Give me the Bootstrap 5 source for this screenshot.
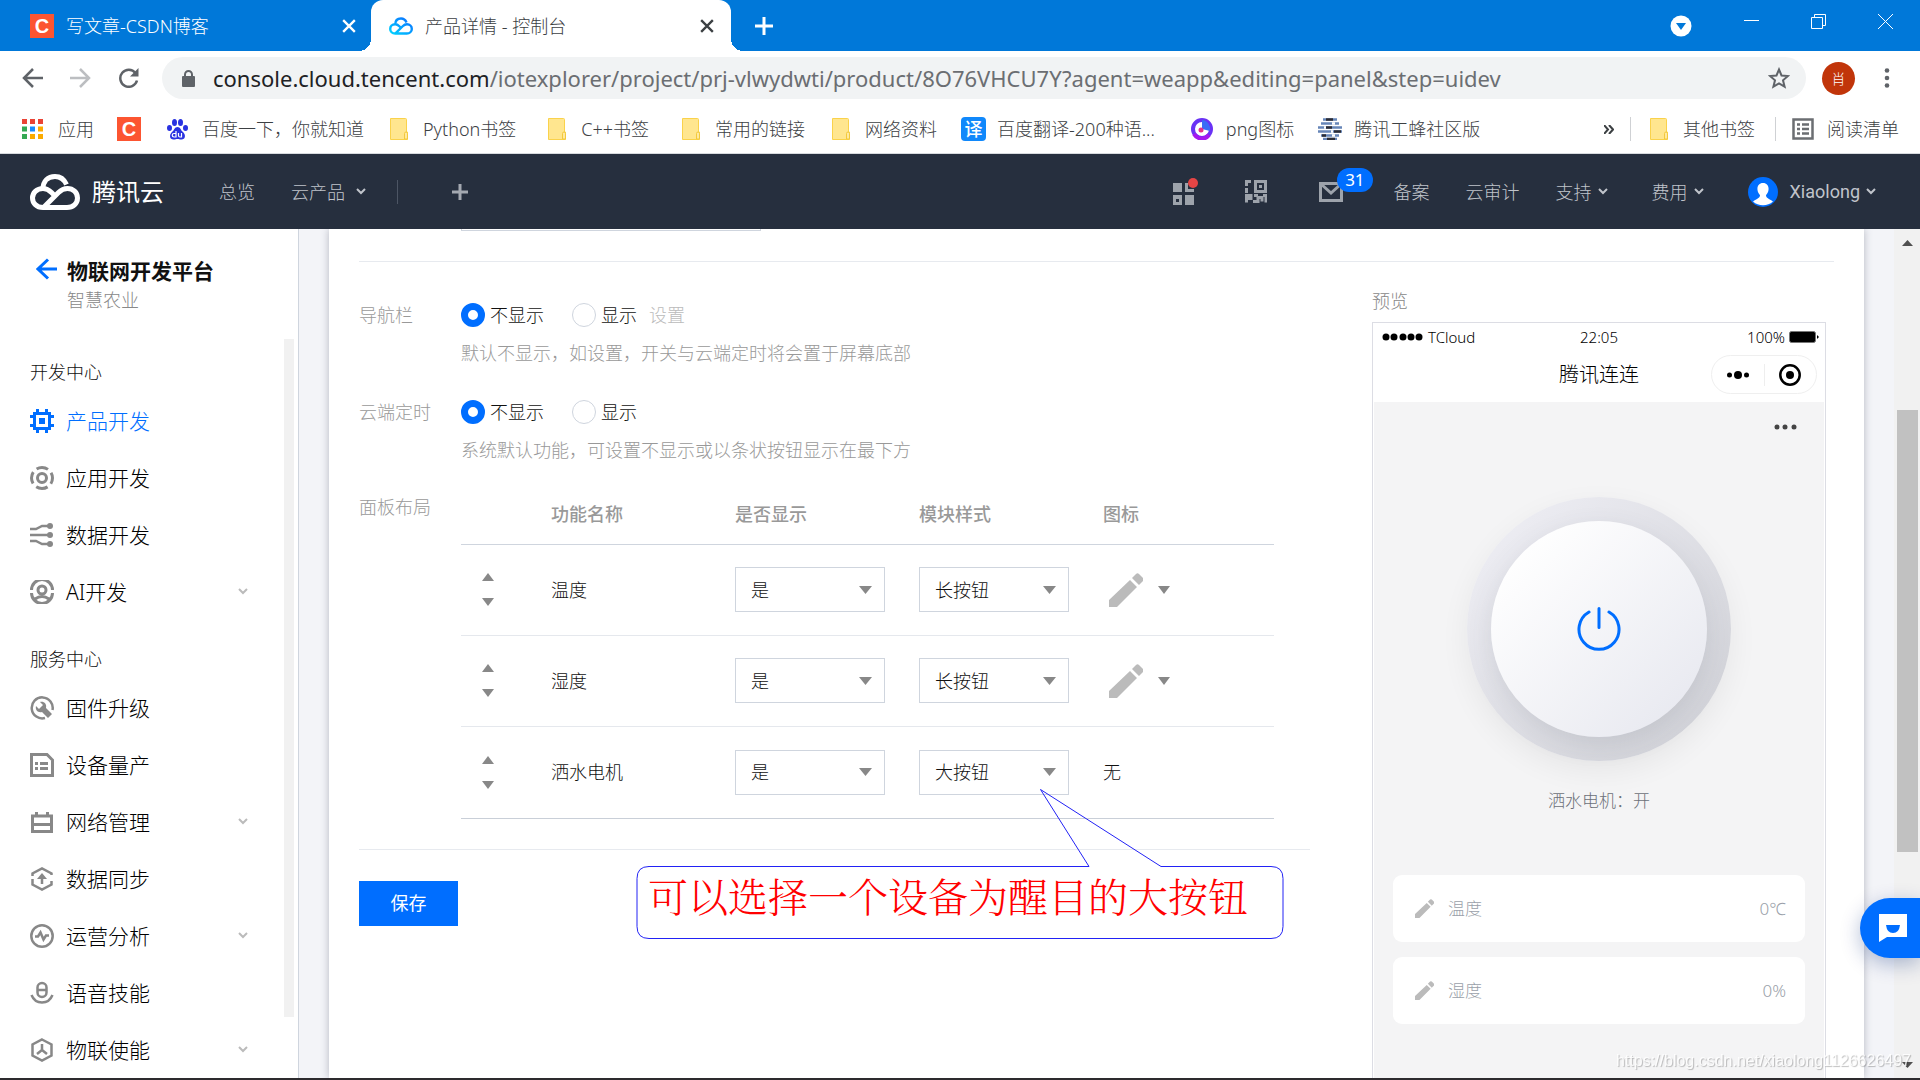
<!DOCTYPE html>
<html lang="zh-CN">
<head>
<meta charset="utf-8">
<meta name="viewport" content="width=device-width, initial-scale=1">
<title>产品详情 - 控制台</title>
<link href="https://cdn.jsdelivr.net/npm/bootstrap@5.3.0/dist/css/bootstrap.min.css" rel="stylesheet">
<style>
:root{--blue:#006eff;--ink:#111;--muted:#999;--line:#cfd5de;--soft:#e7eaef}
body{font-family:"Noto Sans","Noto Sans CJK SC",sans-serif;font-size:18px;line-height:24px;font-weight:300;color:var(--ink);background:#fff}
a{color:inherit;text-decoration:none}
button{font:inherit;color:inherit;background:none;border:0;padding:0;line-height:0}
svg{display:block;flex:none}
/* browser window */
.tabstrip{height:51px;background:#0078d9;color:#fff}
.tab-idle{width:371px;padding:0 15px 0 30px;gap:12px}
.tab-live{width:360px;padding:0 17px 0 18px;gap:12px;background:#fff;color:#3c4043;border-radius:12px 12px 0 0}
.tab-live::before,.tab-live::after{content:"";position:absolute;bottom:0;width:12px;height:12px}
.tab-live::before{left:-12px;background:radial-gradient(circle at 0 0,#0078d9 12px,#fff 12px)}
.tab-live::after{right:-12px;background:radial-gradient(circle at 100% 0,#0078d9 12px,#fff 12px)}
.addrbar{height:54px;padding:0 30px 0 22px;color:#5f6368}
.omnibox{height:42px;border-radius:21px;background:#f1f3f4;padding:0 16px 0 20px;gap:18px;margin:0 16px 0 22px}
.urltext{font-size:22px;line-height:30px;font-weight:400;color:#6b6e72}
.urltext b{font-weight:400;color:#202124}
.profile-dot{width:33px;height:33px;border-radius:50%;background:#c1350a;color:#fff;font-size:14px;line-height:33px}
.bookmarks{height:49px;border-bottom:1px solid #d7dade;padding:0 21px 0 22px;color:#3c4043}
.bm{display:flex;align-items:center;gap:15px;white-space:nowrap}
.csdn{width:24px;height:24px;background:#fc5531;color:#fff;font:bold 20px/24px "Liberation Sans",sans-serif;text-align:center;flex:none}
.yi{width:25px;height:24px;border-radius:4px;background:#1088fb;color:#fff;font-size:18px;line-height:24px;font-weight:500;text-align:center}
.vsep{width:1px;height:24px;background:#cfd1d4}
/* console header */
.topbar{height:75px;background:#262f3e;color:#c0c4cb;padding:0 44px 0 30px}
.brand{color:#fff;font-size:24px;line-height:32px;font-weight:400;gap:12px}
.topbar .vsep{background:#4c5564}
.count{right:-30px;top:-14px;height:24px;padding:0 8px;border-radius:12px;background:var(--blue);color:#fff;font-size:17px;line-height:24px;font-weight:400}
/* sidebar */
.side{width:299px;border-right:1px solid #cfd5de;background:#fff}
.side h1{font-size:21px;line-height:28px;font-weight:700;margin:0}
.side .heading{font-size:18px;line-height:24px;margin:0;padding-left:30px;font-weight:300}
.side .item{height:57px;padding:0 50px 0 30px;gap:12px;font-size:21px;line-height:28px;color:#000}
.side .item svg:first-child{color:#888}
.side .item span{flex:1}
.side .item.on,.side .item.on svg:first-child{color:var(--blue)}
.side-track{width:10px;right:4px;top:110px;bottom:61px;background:#f1f1f1}
/* page */
.page{background:#f3f4f8;padding:0 30px}
.sheet{display:flow-root;background:#fff;padding:0 30px;box-shadow:0 0 8px rgba(54,58,80,.32)}
.cut-input{width:300px;height:45px;margin:-43px 0 0 102px;border:1px solid var(--line);border-radius:0}
.rule{height:1px;background:var(--soft)}
.cols{gap:62px}
.fields{padding-top:41px}
.field-label{width:102px;color:var(--muted);flex:none}
.hint{color:var(--muted);margin-top:14px}
.pick{display:flex;align-items:center;gap:5px;margin:0}
.pick .form-check-input{width:24px;height:24px;margin:0;border:1px solid var(--line);box-shadow:none;background-image:none}
.pick .form-check-input:checked{border:7px solid var(--blue);background:#fff}
.layout-table{width:813px;table-layout:fixed;margin:0;color:inherit;--bs-table-bg:transparent}
.layout-table th{height:59px;padding:0;vertical-align:middle;color:var(--muted);font-weight:500;border-bottom:1px solid var(--line)}
.layout-table td{height:91px;padding:0;vertical-align:middle;border-bottom:1px solid #e5e8ed;color:inherit}
.layout-table tbody tr:last-child td{height:92px;border-bottom-color:#c9cfd8}
.layout-table .form-select{width:150px;height:45px;border:1px solid var(--line);border-radius:0;padding:0 30px 0 15px;font-size:18px;line-height:24px;font-weight:300;color:var(--ink);background-position:right 12px center;background-size:13px 8px;--bs-form-select-bg-img:url("data:image/svg+xml,%3csvg xmlns='http://www.w3.org/2000/svg' viewBox='0 0 13 8'%3e%3cpath fill='%23888' d='M0 0h13L6.500 8z'/%3e%3c/svg%3e")}
.movers{gap:17px;padding-left:21px;color:#888}
.save{width:99px;height:45px;background:var(--blue);color:#fff;border-radius:0;font-size:18px;line-height:24px;font-weight:400;margin-top:31px}
.save:hover{background:#0062e3;color:#fff}
.callout{left:277px;bottom:-13px;width:648px;height:150px;pointer-events:none}
.callout p{position:absolute;left:12px;bottom:18px;margin:0;font:300 40px/44px "Liberation Serif","Noto Serif CJK SC","Noto Sans CJK SC",serif;color:#f00;white-space:nowrap}
/* phone preview */
.preview{width:454px;flex:none;padding-top:27px;margin-right:8px}
.phone{border:1px solid #dcdde4;margin-top:9px;color:#000}
.phone-status{height:27px;padding:0 6px 0 9px;font-size:15px;line-height:20px}
.phone-title{height:52px;padding-bottom:2px;font-size:20px;line-height:28px}
.capsule{right:8px;top:5px;width:106px;height:39px;border:1px solid #efefef;border-radius:20px;padding:0 15px}
.phone-body{background:#f4f4f5;margin:0 1px;padding:19px 19px 100px;height:780px}
.dial{width:264px;height:264px;border-radius:50%;margin-top:64px;background:linear-gradient(135deg,#ededf3 10%,#cfd0d6 95%);box-shadow:0 10px 30px rgba(0,0,0,.06)}
.dial button{width:216px;height:216px;border-radius:50%;background:linear-gradient(135deg,#fff 12%,#e8e9f0 90%);box-shadow:0 8px 24px rgba(80,82,100,.13);color:#006eff}
.dial-name{margin:28px 0 62px;font-size:17px;color:#6c7078}
.tile{height:67px;border-radius:9px;background:#fff;padding:0 19px 0 22px;gap:14px;font-size:17px;color:#9a9fa9;margin-bottom:15px}
/* scroll track, chat, footer strip */
.track{width:26px;background:#f1f1f1;padding:11px 0 10px}
.thumb{width:21px;height:442px;margin-top:164px;background:#c1c1c1}
.chat{position:fixed;right:0;bottom:122px;width:60px;height:60px;border-radius:30px 0 0 30px;background:var(--blue);color:#fff;box-shadow:0 6px 20px rgba(0,40,120,.3);padding-left:19px}
.watermark{position:fixed;right:9px;bottom:7px;font:16px/24px "Liberation Sans",sans-serif;color:rgba(255,255,255,.85);text-shadow:1px 1px 1px rgba(0,0,0,.25)}
.strip{height:2px;background:#2d2b2e}
</style>
<script src="https://cdn.jsdelivr.net/npm/bootstrap@5.3.0/dist/js/bootstrap.bundle.min.js"></script>
</head>
<body class="vh-100 overflow-hidden d-flex flex-column">
<svg width="0" height="0" class="position-absolute" aria-hidden="true">
<symbol id="x" viewBox="0 0 12 12"><path d="M1 1l10 10M11 1L1 11" fill="none" stroke="currentColor" stroke-width="2"/></symbol>
<symbol id="chev" viewBox="0 0 10 7"><path d="M1 1l4 4 4-4" fill="none" stroke="currentColor" stroke-width="2"/></symbol>
<symbol id="folder" viewBox="0 0 18 22"><path d="M.5.5h15a1 1 0 0 1 1 1V14h1v7.500H.5z" fill="#ffe68f" stroke="#fad24b"/><path d="M14.500 21v-5.500q0-1.500 1.500-1.500t1.500 1.500V21z" fill="#ffe9a0" stroke="#f3c93c"/></symbol>
<linearGradient id="skyfade" x1="0" y1="1" x2="1" y2="0"><stop offset="0" stop-color="#00d2ff"/><stop offset="1" stop-color="#0a6cff"/></linearGradient>
<symbol id="cloud" viewBox="0 0 50 36"><path d="M13 15C13 7 18 2.500 25 2.500c5.500 0 9.500 3.500 11.500 8M18 33.500H13C6.500 33.500 2.500 29 2.500 24S6.500 14.500 13 14.500c3.500 0 6 1.500 8.500 4l4 4M17 33.500h20c6 0 10.500-4 10.500-9.500S43 14.500 37.500 14.500c-4 0-6.500 1.500-9 4L14 33" fill="none" stroke-width="5"/></symbol>
<symbol id="pencil" viewBox="0 0 34 34"><path d="M0 34v-7L21 7l7 7L8 34zM23 5l4-4q1.500-1.500 3 0l4 4q1 1.500 0 3l-4 4z" fill="#bbb"/></symbol>
<symbol id="up" viewBox="0 0 12 8"><path d="M6 0l6 8H0z" fill="currentColor"/></symbol>
<symbol id="down" viewBox="0 0 12 8"><path d="M0 0h12L6 8z" fill="currentColor"/></symbol>
</svg>

<header class="tabstrip d-flex flex-shrink-0">
  <div class="tab-idle d-flex align-items-center">
    <span class="csdn">C</span><span class="flex-grow-1">写文章-CSDN博客</span>
    <button aria-label="关闭标签页"><svg width="14" height="14"><use href="#x"/></svg></button>
  </div>
  <div class="tab-live d-flex align-items-center position-relative">
    <svg width="24" height="18" stroke="url(#skyfade)"><use href="#cloud"/></svg><span class="flex-grow-1">产品详情 - 控制台</span>
    <button aria-label="关闭标签页"><svg width="14" height="14"><use href="#x"/></svg></button>
  </div>
  <button class="ms-4 me-auto" aria-label="新标签页"><svg width="18" height="18" stroke="#fff" stroke-width="3"><path d="M9 0v18M0 9h18"/></svg></button>
  <div class="d-flex align-items-center pb-2" style="gap:52px;padding-right:27px">
    <button aria-label="搜索标签页" class="pt-2"><svg width="22" height="22"><circle cx="11" cy="11" r="10.500" fill="#fff"/><path d="M6 8h10l-5 7z" fill="#0078d9"/></svg></button>
    <button aria-label="最小化"><svg width="15" height="15"><path d="M0 6.500h15" stroke="#fff"/></svg></button>
    <button aria-label="还原"><svg width="15" height="15" fill="none" stroke="#fff"><path d="M.5 3.500h11v11H.5zM3.500 3V.5h11v11H12"/></svg></button>
    <button aria-label="关闭"><svg width="15" height="15" stroke="#fff"><path d="M0 0l15 15M15 0L0 15"/></svg></button>
  </div>
</header>

<div class="addrbar d-flex align-items-center flex-shrink-0">
  <div class="d-flex" style="gap:27px">
  <button aria-label="后退"><svg width="21" height="20" fill="none" stroke="#5f6368" stroke-width="2.500"><path d="M21 10H2M11 1l-9 9 9 9"/></svg></button>
  <button aria-label="前进"><svg width="21" height="20" fill="none" stroke="#bcbec1" stroke-width="2.500"><path d="M0 10h19M10 1l9 9-9 9"/></svg></button>
  <button aria-label="刷新"><svg width="22" height="20" fill="none" stroke="#5f6368" stroke-width="2.500"><path d="M17.500 5A8.500 8.500 0 1 0 19 12.500"/><path d="M20.500 0v8.500H12z" fill="#5f6368" stroke="none"/></svg></button>
  </div>
  <div class="omnibox flex-grow-1 d-flex align-items-center">
    <svg width="13" height="17"><rect y="6" width="13" height="11" rx="1" fill="#5f6368"/><path d="M3 7V4.500a3.500 3.500 0 0 1 7 0V7" fill="none" stroke="#5f6368" stroke-width="2"/></svg>
    <span class="urltext flex-grow-1"><b>console.cloud.tencent.com</b>/iotexplorer/project/prj-vlwydwti/product/8O76VHCU7Y?agent=weapp&amp;editing=panel&amp;step=uidev</span>
    <button aria-label="收藏"><svg width="22" height="22" viewBox="0 0 22 22" fill="none" stroke="#5f6368" stroke-width="2"><path d="M11 2.500l2.500 6 6.500.5-5 4.300 1.600 6.400L11 16.300l-5.600 3.400L7 13.300 2 9l6.500-.5z"/></svg></button>
  </div>
  <span class="profile-dot text-center">肖</span>
  <button aria-label="菜单" style="margin-left:29px"><svg width="6" height="20" fill="#5f6368"><circle cx="3" cy="2.500" r="2.300"/><circle cx="3" cy="10" r="2.300"/><circle cx="3" cy="17.500" r="2.300"/></svg></button>
</div>

<nav class="bookmarks d-flex align-items-center flex-shrink-0" aria-label="书签栏">
  <a class="bm" href="#"><svg width="21" height="20"><path d="M0 0h5v5H0zM8 0h5v5H8zM16 0h5v5h-5z" fill="#ea4335"/><path d="M0 7.500h5v5H0zM0 15h5v5H0z" fill="#34a853"/><path d="M8 7.500h5v5H8z" fill="#1a8cff"/><path d="M16 7.500h5v5h-5zM8 15h5v5H8zM16 15h5v5h-5z" fill="#fbab00"/></svg>应用</a>
  <a class="csdn" href="#" style="margin-left:23px">C</a>
  <a class="bm" href="#" style="margin-left:26px;gap:14px"><svg width="21" height="21" fill="#2932e1"><ellipse cx="7.500" cy="3.500" rx="2.500" ry="3.500"/><ellipse cx="13.500" cy="3.500" rx="2.500" ry="3.500"/><ellipse cx="2.500" cy="9" rx="2.500" ry="3"/><ellipse cx="18.500" cy="9" rx="2.500" ry="3"/><path d="M10.500 8c3 0 3 3 5.500 5s3 7-1 7.500c-2 .3-3-.5-4.500-.5s-2.500.8-4.500.5c-4-.5-3.500-5.500-1-7.500S7.500 8 10.500 8z"/><path d="M9 12v6H7a1.500 1.500 0 0 1 0-3.500h2M11.500 14v2.500q0 1.500 1.500 1.500h1.500v-4" fill="none" stroke="#fff" stroke-width="1.200"/></svg>百度一下，你就知道</a>
  <a class="bm" href="#" style="margin-left:26px"><svg width="18" height="22"><use href="#folder"/></svg>Python书签</a>
  <a class="bm" href="#" style="margin-left:32px"><svg width="18" height="22"><use href="#folder"/></svg>C++书签</a>
  <a class="bm" href="#" style="margin-left:33px"><svg width="18" height="22"><use href="#folder"/></svg>常用的链接</a>
  <a class="bm" href="#" style="margin-left:27px"><svg width="18" height="22"><use href="#folder"/></svg>网络资料</a>
  <a class="bm" href="#" style="margin-left:24px;gap:11px"><span class="yi">译</span>百度翻译-200种语...</a>
  <a class="bm" href="#" style="margin-left:36px;gap:13px"><svg width="22" height="22"><circle cx="11" cy="11" r="9" fill="#fff" stroke="#6a32f5" stroke-width="4"/><path d="M11 11V2a9 9 0 0 1 8 11z" fill="#3b6cf6"/><path d="M3 16a9 9 0 0 0 15 1" fill="none" stroke="#a617ee" stroke-width="4"/><circle cx="10" cy="12" r="2.500" fill="#e8308a"/></svg>png图标</a>
  <a class="bm" href="#" style="margin-left:24px;gap:12px"><svg width="24" height="22"><path d="M5 1.500h14M3 5.500h18M0 9.500h24M0 13.500h24M3 17.500h18M5 21h14" stroke="#6685b8" stroke-width="2.500"/><path d="M8 1.500h7M8 9.500h6M16 13.500h7M4 17.500h4M9 21h8" stroke="#2c2c34" stroke-width="2.500"/><path d="M14 5.500h3M6 9.500h2M13 13.500h2M14 17.500h3" stroke="#fff" stroke-width="2.500"/></svg>腾讯工蜂社区版</a>
  <button class="ms-auto" aria-label="更多书签"><svg width="10" height="9" fill="none" stroke="#3c4043" stroke-width="2"><path d="M0 0l4 4.500L0 9M5 0l4 4.500L5 9"/></svg></button>
  <i class="vsep" style="margin:0 19px 0 16px"></i>
  <a class="bm" href="#"><svg width="18" height="22"><use href="#folder"/></svg>其他书签</a>
  <i class="vsep" style="margin:0 16px 0 20px"></i>
  <a class="bm" href="#" style="gap:13px"><svg width="22" height="22"><path d="M1.500 1.500h19v19h-19z" fill="none" stroke="#6b6e72" stroke-width="2.500"/><path d="M5 6.500h3M10 6.500h7M5 11h3M10 11h7M5 15.500h3M10 15.500h7" stroke="#6b6e72" stroke-width="2.500"/></svg>阅读清单</a>
</nav>

<nav class="topbar d-flex align-items-center flex-shrink-0">
  <a class="brand d-flex align-items-center" href="#"><svg width="50" height="36" stroke="#fff"><use href="#cloud"/></svg>腾讯云</a>
  <a href="#" style="margin-left:55px">总览</a>
  <a href="#" class="d-flex align-items-center" style="margin-left:36px;gap:11px">云产品<svg width="10" height="7"><use href="#chev"/></svg></a>
  <i class="vsep" style="margin:0 54px 0 31px"></i>
  <button aria-label="添加"><svg width="16" height="16" stroke="#a4a9b1" stroke-width="3"><path d="M8 0v16M0 8h16"/></svg></button>
  <button class="ms-auto" aria-label="控制面板"><svg width="26" height="28" fill="#9da3ab"><path d="M0 5h9v9H0zM0 17h9v10H0zm3 4v3h3v-3zM12 17h9v10h-9zM12 5h3v6h6v3h-9z" fill-rule="evenodd"/><circle cx="20" cy="5" r="5" fill="#e54545"/></svg></button>
  <button aria-label="小程序码" style="margin-left:46px"><svg width="22" height="23" fill="none" stroke="#9da3ab" stroke-width="3"><path d="M6 1.500H1.500V6M1.500 8v5M10.500 1.500h10v10h-10zM14 6.500h3M0 15.500h6v3H1.500v4M8 21.500h5v-4h4v4M18 15.500h3v7M9 15.500h4"/></svg></button>
  <a class="position-relative d-block" href="#" style="margin-left:52px" aria-label="消息"><svg width="24" height="20" fill="none" stroke="#9da3ab" stroke-width="3"><path d="M1.500 1.500h21v17h-21zM2 2l10 9L22 2"/></svg><span class="count position-absolute">31</span></a>
  <a href="#" style="margin-left:51px">备案</a>
  <a href="#" style="margin-left:36px">云审计</a>
  <a href="#" class="d-flex align-items-center" style="margin-left:36px;gap:6px">支持<svg width="10" height="7"><use href="#chev"/></svg></a>
  <a href="#" class="d-flex align-items-center" style="margin-left:44px;gap:6px">费用<svg width="10" height="7"><use href="#chev"/></svg></a>
  <a href="#" class="d-flex align-items-center" style="margin-left:44px;gap:6px"><svg width="30" height="30" style="margin-right:6px"><circle cx="15" cy="15" r="15" fill="#006eff"/><path d="M15 6c4 0 6 3 5.500 7-.3 2.500-1.500 4-2.500 5 0 3 2 3 7 6.500a15 15 0 0 1-20 0C10 21 12 21 12 18c-1-1-2.200-2.500-2.500-5C9 9 11 6 15 6z" fill="#fff"/></svg><span style="font-family:Roboto,sans-serif;font-weight:400">Xiaolong</span><svg width="10" height="7"><use href="#chev"/></svg></a>
</nav>

<div class="d-flex flex-grow-1 overflow-hidden" style="min-height:0">
  <aside class="side position-relative flex-shrink-0 overflow-hidden">
    <div class="d-flex" style="padding:28px 0 0 36px;gap:10px">
      <a href="#" aria-label="返回"><svg width="21" height="24" fill="none" stroke="#006eff" stroke-width="3"><path d="M21 12H2M12 2.500L2 12l10 9.500"/></svg></a>
      <div><h1>物联网开发平台</h1><div style="color:#888;margin-top:3px">智慧农业</div></div>
    </div>
    <h2 class="heading" style="margin-top:48px">开发中心</h2>
    <nav class="pt-1 mt-1">
      <a class="item on d-flex align-items-center" href="#"><svg width="24" height="24" fill="none" stroke="currentColor" stroke-width="3"><path d="M4.500 4.500h15v15h-15zM7.500 0v4M16.500 0v4M7.500 20v4M16.500 20v4M0 7.500h4M0 16.500h4M20 7.500h4M20 16.500h4"/><path d="M9 9h6v6H9z" fill="currentColor" stroke="none"/></svg><span>产品开发</span></a>
      <a class="item d-flex align-items-center" href="#"><svg width="24" height="24" fill="none" stroke="currentColor" stroke-width="3"><circle cx="12" cy="12" r="4.500"/><circle cx="12" cy="12" r="10.500" stroke-dasharray="12 4.500" stroke-dashoffset="6"/></svg><span>应用开发</span></a>
      <a class="item d-flex align-items-center" href="#"><svg width="24" height="24" fill="none" stroke="currentColor" stroke-width="2.500"><path d="M0 6h6l6-3h8M0 12h20M0 18h6l6 3h8"/><g fill="currentColor" stroke="none"><circle cx="20" cy="3" r="3"/><circle cx="20" cy="12" r="3"/><circle cx="20" cy="21" r="3"/></g></svg><span>数据开发</span></a>
      <a class="item d-flex align-items-center" href="#"><svg width="24" height="24" fill="none" stroke="currentColor" stroke-width="3"><circle cx="12" cy="10" r="4"/><path d="M1.500 10a10.500 10.500 0 0 1 21 0M1.500 13a10.500 10.500 0 0 0 21 0M5 19q7-5 14 0"/></svg><span>AI开发</span><svg width="10" height="7" color="#bbb"><use href="#chev"/></svg></a>
    </nav>
    <h2 class="heading" style="margin-top:27px">服务中心</h2>
    <nav class="pt-1 mt-1">
      <a class="item d-flex align-items-center" href="#"><svg width="24" height="24"><path d="M15 22A10.500 10.500 0 1 1 22.500 14" fill="none" stroke="currentColor" stroke-width="2.500"/><path d="M10 6c4-1 7 2 6 6l6 6-4 4-6-6c-4 1-7-2-6-6l3 3 4-4z" fill="currentColor"/></svg><span>固件升级</span></a>
      <a class="item d-flex align-items-center" href="#"><svg width="24" height="24" fill="none" stroke="currentColor" stroke-width="3"><path d="M1.500 1.500H17l5.500 5.500v15.500h-21zM5 10.500h3M10 10.500h8M5 15.500h3M10 15.500h8"/></svg><span>设备量产</span></a>
      <a class="item d-flex align-items-center" href="#"><svg width="24" height="24" fill="none" stroke="currentColor" stroke-width="3"><path d="M2.500 6h19v15.500h-19zM2 14.500h20M6.500 2v4M17.500 2v4"/></svg><span>网络管理</span><svg width="10" height="7" color="#bbb"><use href="#chev"/></svg></a>
      <a class="item d-flex align-items-center" href="#"><svg width="24" height="24" fill="none" stroke="currentColor" stroke-width="2.500"><path d="M2.500 9V6.500L12 1.500l9.500 5V8M2.500 12v5.500L12 22.500l9.500-5V14M12 17V9"/><path d="M12 6l5 6H7z" fill="currentColor" stroke="none"/></svg><span>数据同步</span></a>
      <a class="item d-flex align-items-center" href="#"><svg width="24" height="24" fill="none" stroke="currentColor" stroke-width="2.500"><circle cx="12" cy="12" r="10.700"/><path d="M5 12.500h3l2.500-4 3 7 2.500-4h3"/></svg><span>运营分析</span><svg width="10" height="7" color="#bbb"><use href="#chev"/></svg></a>
      <a class="item d-flex align-items-center" href="#"><svg width="24" height="24" fill="none" stroke="currentColor" stroke-width="2.500"><rect x="7.500" y="2" width="9" height="14" rx="4.500"/><path d="M7 9h10M1.500 14c2 5 6 7.500 10.500 7.500S20.500 19 22.500 14"/></svg><span>语音技能</span></a>
      <a class="item d-flex align-items-center" href="#"><svg width="24" height="24" fill="none" stroke="currentColor" stroke-width="2.500"><path d="M12 1.500l9.500 5v11l-9.500 5-9.500-5v-11zM12 6v7M12 12l-5 4M12 12l5 4"/></svg><span>物联使能</span><svg width="10" height="7" color="#bbb"><use href="#chev"/></svg></a>
    </nav>
    <div class="side-track position-absolute"></div>
  </aside>

  <main class="page flex-grow-1 overflow-hidden">
    <div class="sheet h-100">
      <input class="cut-input d-block" type="text" aria-label="面板标题">
      <div class="rule" style="margin-top:30px"></div>
      <div class="cols d-flex">
        <form class="fields flex-grow-1">
          <div class="d-flex">
            <div class="field-label">导航栏</div>
            <div>
              <div class="d-flex align-items-center">
                <label class="pick"><input class="form-check-input" type="radio" name="nav" checked>不显示</label>
                <label class="pick" style="margin:0 12px 0 28px"><input class="form-check-input" type="radio" name="nav">显示</label>
                <a href="#" style="color:#bbb">设置</a>
              </div>
              <div class="hint">默认不显示，如设置，开关与云端定时将会置于屏幕底部</div>
            </div>
          </div>
          <div class="d-flex" style="margin:35px 0 23px">
            <div class="field-label">云端定时</div>
            <div>
              <div class="d-flex align-items-center">
                <label class="pick"><input class="form-check-input" type="radio" name="timer" checked>不显示</label>
                <label class="pick" style="margin-left:28px"><input class="form-check-input" type="radio" name="timer">显示</label>
              </div>
              <div class="hint">系统默认功能，可设置不显示或以条状按钮显示在最下方</div>
            </div>
          </div>
          <div class="d-flex">
            <div class="field-label" style="padding-top:10px">面板布局</div>
            <table class="table layout-table">
              <colgroup><col style="width:90px"><col style="width:184px"><col style="width:184px"><col style="width:184px"><col></colgroup>
              <thead><tr><th></th><th>功能名称</th><th>是否显示</th><th>模块样式</th><th>图标</th></tr></thead>
              <tbody>
                <tr>
                  <td><div class="movers d-flex flex-column"><button type="button" aria-label="上移"><svg width="12" height="8"><use href="#up"/></svg></button><button type="button" aria-label="下移"><svg width="12" height="8"><use href="#down"/></svg></button></div></td>
                  <td>温度</td>
                  <td><select class="form-select" aria-label="是否显示"><option>是</option><option>否</option></select></td>
                  <td><select class="form-select" aria-label="模块样式"><option>长按钮</option><option>大按钮</option></select></td>
                  <td><button type="button" class="d-flex align-items-center" style="gap:15px;padding-left:6px;color:#888" aria-label="选择图标"><svg width="34" height="34"><use href="#pencil"/></svg><svg width="12" height="8"><use href="#down"/></svg></button></td>
                </tr>
                <tr>
                  <td><div class="movers d-flex flex-column"><button type="button" aria-label="上移"><svg width="12" height="8"><use href="#up"/></svg></button><button type="button" aria-label="下移"><svg width="12" height="8"><use href="#down"/></svg></button></div></td>
                  <td>湿度</td>
                  <td><select class="form-select" aria-label="是否显示"><option>是</option><option>否</option></select></td>
                  <td><select class="form-select" aria-label="模块样式"><option>长按钮</option><option>大按钮</option></select></td>
                  <td><button type="button" class="d-flex align-items-center" style="gap:15px;padding-left:6px;color:#888" aria-label="选择图标"><svg width="34" height="34"><use href="#pencil"/></svg><svg width="12" height="8"><use href="#down"/></svg></button></td>
                </tr>
                <tr>
                  <td><div class="movers d-flex flex-column"><button type="button" aria-label="上移"><svg width="12" height="8"><use href="#up"/></svg></button><button type="button" aria-label="下移"><svg width="12" height="8"><use href="#down"/></svg></button></div></td>
                  <td>洒水电机</td>
                  <td><select class="form-select" aria-label="是否显示"><option>是</option><option>否</option></select></td>
                  <td><select class="form-select" aria-label="模块样式"><option>大按钮</option><option>长按钮</option></select></td>
                  <td>无</td>
                </tr>
              </tbody>
            </table>
          </div>
          <div class="rule" style="margin-top:30px"></div>
          <div class="position-relative">
            <button type="submit" class="btn save d-block">保存</button>
            <div class="callout position-absolute">
              <svg width="648" height="150" fill="none" stroke="#2222f5"><path d="M12.500 77.500H453L404.500.5 525 77.500h110q12 0 12 12v48q0 12-12 12h-622q-12 0-12-12v-48q0-12 12-12"/></svg>
              <p>可以选择一个设备为醒目的大按钮</p>
            </div>
          </div>
        </form>

        <section class="preview">
          <div style="color:#888">预览</div>
          <div class="phone">
            <div class="phone-status position-relative d-flex align-items-center">
              <svg width="42" height="8" class="me-1"><circle cx="4" cy="4" r="3.500"/><circle cx="12" cy="4" r="3.500"/><circle cx="21" cy="4" r="3.500"/><circle cx="29" cy="4" r="3.500"/><circle cx="37" cy="4" r="3.500"/></svg>TCloud
              <span class="position-absolute start-50 translate-middle-x">22:05</span>
              <span class="ms-auto me-1">100%</span>
              <svg width="30" height="12"><rect x=".5" y=".5" width="26" height="11" rx="2" stroke="#777"/><path d="M28 4l2 2-2 2z"/></svg>
            </div>
            <div class="phone-title position-relative d-flex align-items-center justify-content-center">腾讯连连
              <div class="capsule position-absolute d-flex align-items-center justify-content-between">
                <svg width="22" height="8"><circle cx="2.500" cy="4" r="2.500"/><circle cx="11" cy="4" r="4"/><circle cx="19.500" cy="4" r="2.500"/></svg>
                <i style="width:1px;height:22px;background:#eee"></i>
                <svg width="22" height="22"><circle cx="11" cy="11" r="9.700" fill="none" stroke="#000" stroke-width="2.500"/><circle cx="11" cy="11" r="4"/></svg>
              </div>
            </div>
            <div class="phone-body">
              <svg width="23" height="12" fill="#444" class="ms-auto me-2"><circle cx="3" cy="6" r="2.500"/><circle cx="11" cy="6" r="2.500"/><circle cx="20" cy="6" r="2.500"/></svg>
              <div class="dial mx-auto d-flex align-items-center justify-content-center">
                <button class="d-flex align-items-center justify-content-center" aria-label="电源"><svg width="44" height="44" fill="none" stroke="currentColor" stroke-width="3" stroke-linecap="round"><path d="M12 5a20 20 0 1 0 20 0M22 1.500v19"/></svg></button>
              </div>
              <div class="dial-name text-center">洒水电机：开</div>
              <div class="tile d-flex align-items-center"><svg width="19" height="19"><use href="#pencil"/></svg>温度<span class="ms-auto">0℃</span></div>
              <div class="tile d-flex align-items-center"><svg width="19" height="19"><use href="#pencil"/></svg>湿度<span class="ms-auto">0%</span></div>
            </div>
          </div>
        </section>
      </div>
    </div>
  </main>

  <div class="track d-flex flex-column align-items-center flex-shrink-0">
    <svg width="11" height="6"><path d="M5.500 0L11 6H0z" fill="#505050"/></svg>
    <div class="thumb"></div>
    <svg width="11" height="6" class="mt-auto"><path d="M0 0h11L5.500 6z" fill="#505050"/></svg>
  </div>
</div>
<footer class="strip flex-shrink-0"></footer>
<button class="chat" aria-label="在线咨询"><svg width="28" height="28"><path d="M0 0h28v23H8l-8 5z" fill="#fff"/><path d="M7 11h14q-1 8-7 8t-7-8z" fill="#006eff"/></svg></button>
<div class="watermark">https://blog.csdn.net/xiaolong1126626497</div>
</body>
</html>
